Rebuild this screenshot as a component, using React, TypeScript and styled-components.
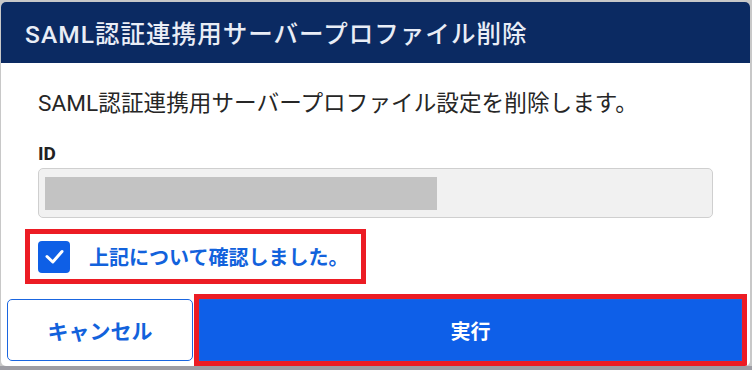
import React from "react";
import styled, { createGlobalStyle } from "styled-components";

const Global = createGlobalStyle`
  html, body {
    margin: 0;
    padding: 0;
    background: #c2c2c4;
  }
  body {
    font-family: Roboto, "Noto Sans CJK JP", sans-serif;
  }
  * { box-sizing: border-box; }
`;

const Backdrop = styled.div`
  width: 752px;
  height: 370px;
  padding: 2px 2px 4px 1px;
  background: linear-gradient(#c8c8c8 0 366px, #9d9da4 366px);
`;

const Dialog = styled.div`
  width: 749px;
  height: 364px;
  background: #ffffff;
  border-radius: 5px;
  display: flex;
  flex-direction: column;
  overflow: hidden;
`;

const Header = styled.div`
  height: 61px;
  flex: none;
  background: #0b2a62;
  display: flex;
  align-items: center;
  padding: 0 24px;
  color: #e9edf6;
  font-size: 24.5px;
  font-weight: 500;
  letter-spacing: 1.05px;
`;

const Body = styled.div`
  display: flex;
  flex-direction: column;
  padding: 21px 37px 0;
`;

const Description = styled.p`
  margin: 0;
  height: 40px;
  line-height: 40px;
  font-size: 22.6px;
  letter-spacing: 0.05px;
  color: #262626;
  white-space: nowrap;
`;

const FieldLabel = styled.div`
  margin-top: 20px;
  height: 20px;
  line-height: 20px;
  font-size: 19px;
  font-weight: 700;
  color: #222;
`;

const ReadonlyInput = styled.div`
  margin-top: 4px;
  height: 50px;
  border: 1px solid #cfcfcf;
  border-radius: 5px;
  background: #f1f1f1;
  display: flex;
  align-items: center;
  padding: 0 6px;
`;

const Redacted = styled.div<{ $w: number }>`
  width: ${(p) => p.$w}px;
  height: 33px;
  background: #c3c3c3;
`;

const ConfirmRow = styled.label`
  margin: 16px 0 0 -8px;
  align-self: flex-start;
  display: flex;
  align-items: center;
  gap: 19px;
  height: 45px;
  padding: 0 13px 0 8px;
  outline: 5px solid #ec1c24;
  cursor: pointer;
`;

const CheckBox = styled.span`
  width: 32px;
  height: 32px;
  border-radius: 4px;
  background: #0e5fe6;
  display: flex;
  align-items: center;
  justify-content: center;
  flex: none;
`;

const ConfirmText = styled.span`
  font-size: 20px;
  font-weight: 700;
  color: #1262dc;
  white-space: nowrap;
`;

const Footer = styled.div`
  margin-top: 20px;
  display: flex;
  gap: 6px;
  padding: 0 8px 0 6px;
`;

const Button = styled.button<{ $primary?: boolean; $highlight?: boolean }>`
  height: 62px;
  border-radius: ${(p) => (p.$primary ? "0" : "5px")};
  border: 1px solid #1a66e0;
  background: ${(p) => (p.$primary ? "#0e5fe8" : "#ffffff")};
  color: ${(p) => (p.$primary ? "#ffffff" : "#1262dc")};
  font-family: Roboto, "Noto Sans CJK JP", sans-serif;
  font-size: ${(p) => (p.$primary ? "20px" : "21px")};
  font-weight: 700;
  width: ${(p) => (p.$primary ? "543px" : "186px")};
  flex: none;
  outline: ${(p) => (p.$highlight ? "5px solid #ec1c24" : "none")};
  cursor: pointer;
  padding: 0;
`;

export default function App() {
  return (
    <>
      <Global />
      <Backdrop>
        <Dialog>
          <Header>SAML認証連携用サーバープロファイル削除</Header>
          <Body>
            <Description>SAML認証連携用サーバープロファイル設定を削除します。</Description>
            <FieldLabel>ID</FieldLabel>
            <ReadonlyInput>
              <Redacted $w={392} />
            </ReadonlyInput>
            <ConfirmRow>
              <CheckBox>
                <svg width="32" height="32" viewBox="0 0 32 32">
                  <path
                    d="M9 15.5 L14.8 21 L24 10.5"
                    fill="none"
                    stroke="#ffffff"
                    strokeWidth="3"
                    strokeLinecap="round"
                    strokeLinejoin="round"
                  />
                </svg>
              </CheckBox>
              <ConfirmText>上記について確認しました。</ConfirmText>
            </ConfirmRow>
          </Body>
          <Footer>
            <Button>キャンセル</Button>
            <Button $primary $highlight>
              実行
            </Button>
          </Footer>
        </Dialog>
      </Backdrop>
    </>
  );
}
